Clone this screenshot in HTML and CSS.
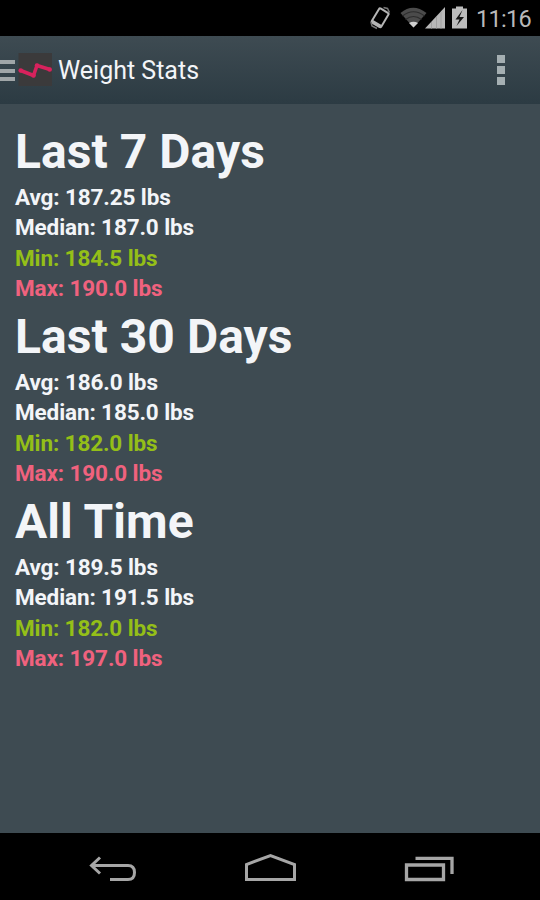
FILE: index.html
```html
<!DOCTYPE html>
<html lang="en">
<head>
    <meta charset="UTF-8">
    <meta name="viewport" content="width=device-width, initial-scale=1.0">
    <title>Weight Stats</title>
    <link rel="stylesheet" href="styles.css">
</head>
<body>

    <!-- Status Bar -->
    <div class="status-bar">
        <svg class="status-icons" width="99" height="36" viewBox="0 0 99 36">
            <!-- Rotation -->
            <g transform="rotate(31 11 18)">
                <rect x="5.500" y="9.500" width="11" height="16.500" rx="1.500" fill="none" stroke="#b5b5b5" stroke-width="2"/>
                <path d="M6 24.500h10" stroke="#b5b5b5" stroke-width="2.500"/>
            </g>
            <path d="M14.500 7.500l4 1 2 4M2 22l1 4 5 2.500" fill="none" stroke="#777" stroke-width="1.500"/>
            <!-- Wifi -->
            <path d="M31.500 13Q44 2.500 57.500 13L44.500 27.500z" fill="#4b4b4b"/>
            <path d="M33.500 16Q44.500 7.500 55.500 16M36.500 19.500Q44.500 13.500 52.500 19.500" fill="none" stroke="#2c2c2c" stroke-width="1.200"/>
            <path d="M40 23Q44.500 20.500 49 23L44.500 27.500z" fill="#d0d0d0"/>
            <!-- Signal -->
            <path d="M56 28.500L76 7v21.500z" fill="#b8b8b8"/>
            <path d="M62.500 22v6.500M67.500 17v11.500M72 12v16.500" stroke="#a0a0a0" stroke-width="1"/>
            <!-- Battery -->
            <path d="M83 8.500h4V6.500h7v2h4v20H83z" fill="#bcbcbc"/>
            <path d="M93.500 10l-7 9.500h4L87.500 26l7.500-9h-4.500z" fill="#161616"/>
        </svg>
        <span class="clock">11:16</span>
    </div>

    <!-- Action Bar -->
    <div class="action-bar">
        <div class="menu-lines">
            <span></span>
            <span></span>
            <span></span>
        </div>
        <svg class="app-icon" width="34" height="34" viewBox="0 0 34 34">
            <rect x=".5" width="33.500" height="33" fill="#3b3a3b"/>
            <path d="M2.700 17.500L15.500 22.500 19 12.500 32 16.500" fill="none" stroke="#d8225d" stroke-width="3.600" stroke-linejoin="round"/>
            <g fill="#d8225d">
                <circle cx="2.700" cy="17.500" r="2.300"/>
                <circle cx="15.500" cy="22.500" r="2.300"/>
                <circle cx="19" cy="12.500" r="2.300"/>
                <circle cx="31.700" cy="16.500" r="2.300"/>
            </g>
        </svg>
        <h1 class="title">Weight Stats</h1>
        <div class="overflow">
            <span></span>
            <span></span>
            <span></span>
        </div>
    </div>

    <!-- Stats -->
    <div class="stats">
        <div class="stats-section">
            <h2>Last 7 Days</h2>
            <p>Avg: 187.25 lbs</p>
            <p>Median: 187.0 lbs</p>
            <p class="min">Min: 184.5 lbs</p>
            <p class="max">Max: 190.0 lbs</p>
        </div>

        <div class="stats-section">
            <h2>Last 30 Days</h2>
            <p>Avg: 186.0 lbs</p>
            <p>Median: 185.0 lbs</p>
            <p class="min">Min: 182.0 lbs</p>
            <p class="max">Max: 190.0 lbs</p>
        </div>

        <div class="stats-section">
            <h2>All Time</h2>
            <p>Avg: 189.5 lbs</p>
            <p>Median: 191.5 lbs</p>
            <p class="min">Min: 182.0 lbs</p>
            <p class="max">Max: 197.0 lbs</p>
        </div>
    </div>

    <!-- Navigation Bar -->
    <div class="nav-bar">
        <svg width="180" height="67" viewBox="0 0 180 67">
            <path d="M100 24.500L91.500 32.500 100 40.500M92 32.500H128Q134.500 32.500 134.500 39.500T128 46.500H110" fill="none" stroke="#a6a6a6" stroke-width="3"/>
        </svg>
        <svg width="180" height="67" viewBox="0 0 180 67">
            <path d="M66.500 46.500V31.500L90.500 22.500 114.500 31.500V46.500z" fill="none" stroke="#a6a6a6" stroke-width="3"/>
        </svg>
        <svg width="180" height="67" viewBox="0 0 180 67">
            <path d="M46.500 32h37v14.500h-37zM55.500 25.300H92V41" fill="none" stroke="#a6a6a6" stroke-width="3.300"/>
        </svg>
    </div>

</body>
</html>
```
FILE: styles.css
```css
/* General Styles */
body {
    margin: 0;
    width: 540px;
    height: 900px;
    display: flex;
    flex-direction: column;
    overflow: hidden;
    background: #3e4b52;
    color: #f3f5f8;
    font-family: Roboto, sans-serif;
}

h1, h2, p {
    margin: 0;
}

/* Status Bar */
.status-bar {
    display: flex;
    align-items: center;
    justify-content: flex-end;
    height: 36px;
    padding-right: 8px;
    background: #000;
}

.status-icons {
    margin-right: 8px;
}

.clock {
    width: 56px;
    padding-top: 2px;
    font-size: 23.5px;
    line-height: 34px;
    letter-spacing: -0.7px;
    white-space: nowrap;
    color: #b9b9b9;
}

/* Action Bar */
.action-bar {
    display: flex;
    align-items: center;
    height: 68px;
    background: linear-gradient(#3e4b52, #2c3b43);
}

.menu-lines {
    display: flex;
    flex-direction: column;
    gap: 4.5px;
    width: 15px;
    padding-top: 1px;
}

.menu-lines span {
    height: 4px;
    background: #a0a6a8;
}

.app-icon {
    margin-left: 3px;
}

.title {
    flex: 1;
    margin-left: 6px;
    padding-top: 2px;
    font-size: 25px;
    font-weight: normal;
    line-height: 30px;
}

.overflow {
    display: flex;
    flex-direction: column;
    gap: 3px;
    margin-right: 35px;
}

.overflow span {
    width: 8px;
    height: 8px;
    background: #a5afb2;
}

/* Stats */
.stats {
    flex: 1;
    padding: 14px 15px 0;
}

.stats-section {
    height: 185px;
    font-weight: bold;
}

.stats-section h2 {
    padding-top: 4px;
    font-size: 48px;
    line-height: 60px;
    letter-spacing: 0.05px;
}

.stats-section p {
    font-size: 22.5px;
    line-height: 30.25px;
    letter-spacing: -0.12px;
}

.stats-section .min {
    color: #94bf18;
}

.stats-section .max {
    color: #f0627e;
}

/* Navigation Bar */
.nav-bar {
    display: flex;
    height: 67px;
    background: #000;
}
```
